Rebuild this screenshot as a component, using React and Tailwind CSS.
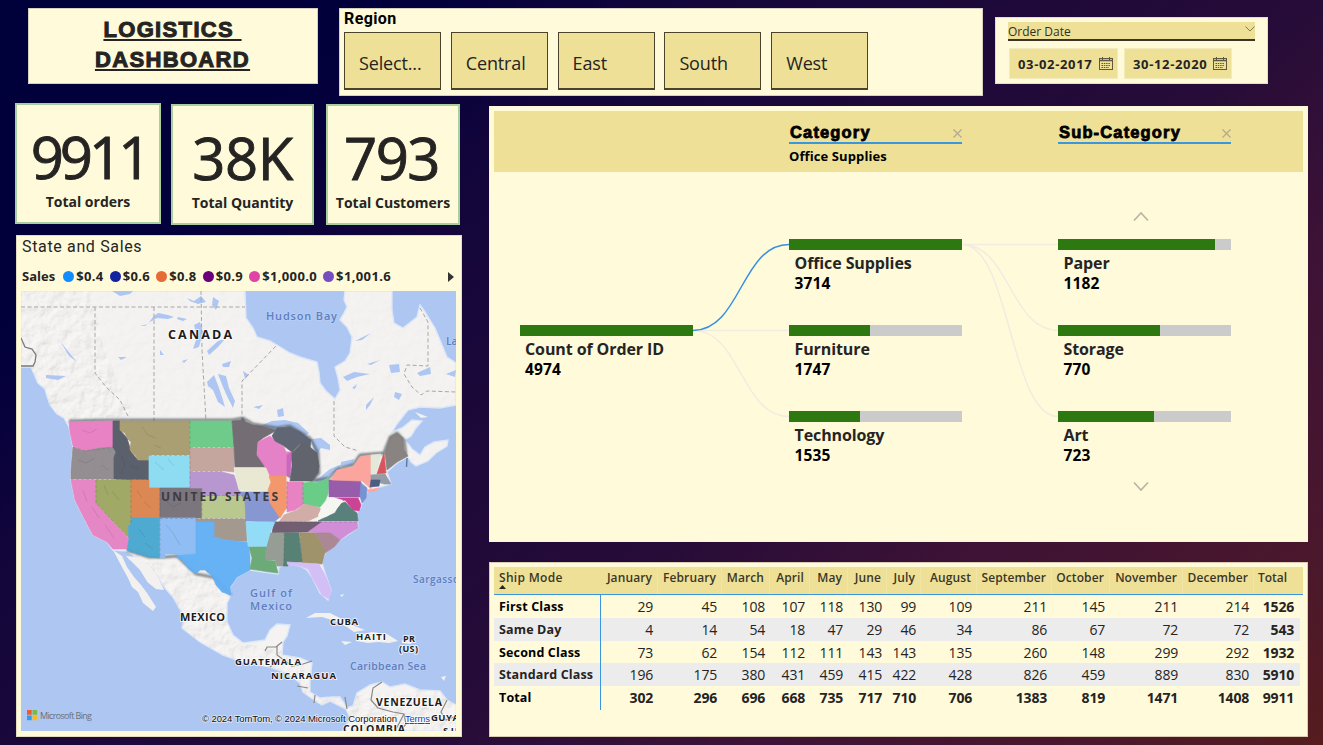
import React from "react";

const regions = ["Select...", "Central", "East", "South", "West"];

const legend = [
  ["$0.4", "bg-[#118dff]"],
  ["$0.6", "bg-[#12239e]"],
  ["$0.8", "bg-[#e66c37]"],
  ["$0.9", "bg-[#6b007b]"],
  ["$1,000.0", "bg-[#e044a7]"],
  ["$1,001.6", "bg-[#744ec2]"],
];

const months = [
  "January", "February", "March", "April", "May", "June", "July",
  "August", "September", "October", "November", "December",
];

const shipRows = [
  ["First Class", 29, 45, 108, 107, 118, 130, 99, 109, 211, 145, 211, 214, 1526],
  ["Same Day", 4, 14, 54, 18, 47, 29, 46, 34, 86, 67, 72, 72, 543],
  ["Second Class", 73, 62, 154, 112, 111, 143, 143, 135, 260, 148, 299, 292, 1932],
  ["Standard Class", 196, 175, 380, 431, 459, 415, 422, 428, 826, 459, 889, 830, 5910],
  ["Total", 302, 296, 696, 668, 735, 717, 710, 706, 1383, 819, 1471, 1408, 9911],
];

const states = [
  ["#e97fc4", "69,422 113,421 113,447 100,448 85,451 80,450 73,446 70,432"],
  ["#918a8e", "73,447 80,450 85,451 100,448 115,447 116,452 114,457 114,479 71,479 71,470"],
  ["#e584c4", "71,480 96,480 96,503 129,539 127,549 113,549 107,542 93,535 85,520 75,500"],
  ["#9fa763", "96,480 131,480 131,524 128,526 129,538 96,503"],
  ["#575c69", "113,421 120,421 120,430 127,438 130,448 131,452 138,460 149,459 149,480 114,479 114,457 116,452 113,447"],
  ["#a89c6f", "120,421 190,421 190,455 149,455 149,460 138,460 135,455 130,450 131,442 127,438 125,433 120,430"],
  ["#8adcf3", "149,456 190,456 190,488 149,488"],
  ["#dc8550", "131,480 149,480 149,488 160,488 160,518 131,518"],
  ["#78717a", "160,488 202,488 202,518 160,518"],
  ["#49a8d0", "131,518 160,518 160,558 149,557 127,550 129,539 128,526 131,524"],
  ["#8cbcf5", "160,518 196,518 196,554 165,554 165,558 160,558"],
  ["#6bca86", "190,421 232,421 234,447 190,447"],
  ["#c3a49c", "190,448 234,448 234,472 225,471 190,471"],
  ["#b795cf", "190,472 222,472 234,475 239,490 243,496 202,496 202,488 190,488"],
  ["#b8c78c", "202,496 243,496 246,502 246,518 202,518"],
  ["#a1978c", "196,519 246,519 247,541 235,541 225,540 214,537 214,522 196,522"],
  ["#62b0f5", "196,522 214,522 214,537 225,540 235,541 248,542 250,556 250,570 237,577 230,587 231,595 222,592 216,585 213,577 205,570 200,570 196,574 188,568 184,562 175,555 196,554"],
  ["#706a70", "232,421 241,420 243,418 246,422 253,425 262,426 268,428 277,430 263,438 258,442 257,453 262,459 266,467 235,467 234,447"],
  ["#e57fc6", "258,442 270,436 275,441 284,447 286,452 294,452 291,462 289,476 269,476 264,465 257,455"],
  ["#c765bc", "287,455 294,451 291,462 290,478 287,476"],
  ["#5c6270", "272,436 277,428 290,427 300,432 311,440 310,448 300,444 292,452 284,446 275,441"],
  ["#5d6068", "290,481 292,466 292,453 302,443 310,447 317,453 319,466 318,473 312,481"],
  ["#e9e8d2", "234,468 266,468 271,480 267,491 239,490"],
  ["#8395d0", "240,492 268,492 275,507 280,517 274,522 246,521 245,502"],
  ["#f29668", "269,476 286,476 287,507 280,518 270,503 268,490 271,482"],
  ["#e880c2", "287,482 303,482 303,505 295,510 287,512"],
  ["#65cc84", "303,483 311,482 317,483 329,478 328,494 325,501 320,507 310,506 303,504"],
  ["#d0aba5", "279,522 284,515 297,510 305,504 320,508 321,515 308,521"],
  ["#9559a8", "329,480 360,480 363,489 361,497 329,497"],
  ["#fda39d", "332,478 337,470 353,467 360,457 371,455 371,489 362,481 332,480"],
  ["#fda39d", "367,490 380,488 375,491 368,492"],
  ["#e3e8d8", "371,455 381,454 376,474 371,474"],
  ["#d9505a", "384,453 386,473 377,474"],
  ["#86807e", "385,453 390,437 397,433 403,438 404,450 408,456 397,462 387,470"],
  ["#909aa5", "371,475 385,474 391,484 384,484 371,480"],
  ["#46597e", "371,480 380,480 379,486 370,487"],
  ["#7590d0", "361,483 367,488 366,498 362,503 360,496"],
  ["#cb3e94", "335,498 358,498 361,505 359,511 353,510 345,500 336,502"],
  ["#567d78", "318,521 326,517 335,513 340,504 345,502 353,510 357,513 358,521"],
  ["#6e5a6e", "274,522 322,522 310,532 272,533"],
  ["#cf8bd6", "322,522 357,522 358,528 348,534 340,540 330,534 308,532"],
  ["#a98592", "315,533 330,533 340,540 334,547 325,553"],
  ["#9d9068", "300,533 315,533 325,552 322,564 302,563"],
  ["#527e72", "284,533 299,533 302,562 288,563 288,566 283,566"],
  ["#939b93", "270,533 284,533 283,566 277,566 275,560 265,560 266,547"],
  ["#8fdcf8", "246,522 275,522 270,533 266,547 248,546"],
  ["#69a877", "249,547 266,547 265,560 275,561 278,573 270,572 263,571 250,569 252,558"],
  ["#d3bdf7", "287,562 302,563 319,564 326,577 331,590 329,599 322,595 317,586 312,577 308,569 300,566 288,565"],
];

const mainland =
  "M21 291H245L246 318L253 328L257 337L270 341L277 345L290 353L300 357L317 362L319 372L320 383L326 391L335 399L340 390L338 378L335 367L345 361L350 353L352 337L347 327L340 320L344 313L347 307L344 300L345 291H392L392 310L394 323L403 328L417 317L420 305L425 312L430 320L435 328L440 340L447 357L456 363V405L440 408L420 407L408 410L397 424L392 432L402 428L412 420L422 421L416 428L411 436L405 440L412 449L420 455L425 447L434 442L448 440L447 446L436 453L428 461L416 466L411 462L408 457L397 463L387 472L391 484L380 487L367 492L362 503L361 507L357 513L358 528L340 540L325 553L322 563L325 573L331 590L328 600L320 593L312 577L307 570L300 566L287 564L279 567L278 574L263 572L250 570L237 577L230 587L231 595L227 603L227 622L233 635L243 643L265 640L270 630L277 624L290 625L287 636L283 642L282 655L300 658L312 663L310 680L310 692L320 698L332 697L340 697L347 708L353 706L357 693L370 685L382 682L390 687L405 684L420 690L440 691L447 700L456 705V731H343L350 718L346 709L340 706L330 701L322 705L317 702L303 692L300 683L287 673L270 667L243 662L223 655L200 642L182 628L184 619L182 613L173 597L165 588L158 577L150 566L137 558L127 551L113 550L107 542L93 535L85 520L75 500L71 480L71 470L73 447L69 427L64 418L57 414L50 405L47 396L45 389L38 383L34 374L31 367L21 367Z";

const lakes = [
  "M112 291L120 296L130 294L133 291Z",
  "M140 326L148 324L153 317L158 313L168 315L174 317L168 319L157 318L150 322L145 326Z",
  "M178 317L187 319L183 321L177 319Z",
  "M187 298L194 301L201 296L206 302L198 304L190 301Z",
  "M213 297L219 301L216 310L212 305Z",
  "M194 325L200 322L203 332L199 347L193 349L197 337Z",
  "M207 351L218 341L225 339L218 347L209 355Z",
  "M222 364L231 361L229 367L223 367Z",
  "M207 382L214 375L219 388L222 397L225 407L218 402L213 390L208 386Z",
  "M218 374L226 376L229 388L235 401L233 408L227 396L223 387Z",
  "M118 357L127 357L121 360Z",
  "M160 350L164 355L160 355Z",
  "M182 361L188 359L184 363Z",
  "M355 341L371 333L362 340Z",
  "M343 377L354 372L370 374L357 377L347 381Z",
  "M389 365L399 364L400 372L391 373Z",
  "M417 373L430 367L431 374L420 376Z",
  "M395 392L402 394L399 400L394 397Z",
  "M366 405L374 397L370 405L366 410Z",
  "M352 388L357 384L355 389Z",
  "M367 364L380 360L371 365Z",
  "M446 374L456 370L455 377Z",
  "M253 407L263 405L259 409Z",
  "M277 410L283 408L284 416L278 417Z",
  "M243 371L249 375L245 379Z",
  "M60 341L67 350L77 362L69 356Z",
  "M46 375L66 376L58 380L46 378Z",
  "M262 425L272 421L285 420L298 423L309 433L304 436L296 430L284 426L271 430Z",
  "M311 439L321 438L330 445L330 450L321 448L316 457Z",
  "M315 481L330 469L342 464L339 469L330 475L318 484Z",
  "M341 462L354 459L352 465L341 467Z",
];

const borders =
  "M21 307H245M95 307V373L106 387L120 400L129 418M154 307V421M201 291L202 350L206 421M242 421V381L277 345M334 401V436L345 447L359 451M420 308L428 322L428 366L407 365L404 374L412 387L421 395L427 391L456 392";

function MapLabel({ x, y, width, children, size = 10.5, weight = 700, fill = "#1c1c1c", halo = "#ffffff" }) {
  return (
    <text
      x={x}
      y={y}
      textLength={width}
      lengthAdjust="spacing"
      fontSize={size}
      fontWeight={weight}
      fill={fill}
      stroke={halo}
      strokeWidth="2"
      strokeOpacity="0.75"
      paintOrder="stroke"
      strokeLinejoin="round"
    >
      {children}
    </text>
  );
}

function SalesMap() {
  const sea = { fill: "#5f7fc0", halo: "#b9cff6", weight: 600 };
  return (
    <svg viewBox="21 291 435 440" className="block h-[440px] w-[435px]" fontFamily="'Open Sans', 'Noto Sans', sans-serif">
      <defs>
        <filter id="relief" x="0" y="0" width="100%" height="100%">
          <feTurbulence type="fractalNoise" baseFrequency="0.09" numOctaves="4" seed="8" result="n" />
          <feDiffuseLighting in="n" surfaceScale="2.2" lightingColor="#ffffff" result="l">
            <feDistantLight azimuth="225" elevation="58" />
          </feDiffuseLighting>
          <feComposite in="l" in2="SourceAlpha" operator="in" />
        </filter>
        <clipPath id="land"><path d={mainland} /></clipPath>
        <filter id="soft"><feGaussianBlur stdDeviation="0.8" /></filter>
      </defs>
      <rect x="21" y="291" width="435" height="440" fill="#adc6f2" />
      <path d={mainland} fill="#f4f3f1" stroke="#dbe6f8" strokeWidth="1.4" />
      <path d="M113 550L122 556L127 567L134 577L141 585L147 593L156 607L153 611L143 603L138 592L132 587L128 578L123 569Z" fill="#f2f1ef" />
      <path d="M126 556L135 566L147 582L156 589L164 590L158 577L148 563L137 557Z" fill="#f2f1ef" />
      <path d="M130 560L140 570L151 588L143 581L134 572Z" fill="#adc6f2" />
      <path d="M51 399L58 402L66 408L74 418L69 418L60 413L53 406Z" fill="#f2f1ef" />
      <path d="M306 618L315 613L330 613L342 619L352 625L365 630L354 632L347 627L335 621L322 617Z" fill="#f2f1ef" />
      <path d="M359 635L372 632L387 634L398 641L389 643L378 642L368 643L356 641Z" fill="#f2f1ef" />
      <path d="M341 641L352 642L345 645ZM402 640L412 641L411 644L402 643ZM415 412L428 417L421 418ZM340 595L344 594L342 597ZM441 677L446 676L444 681Z" fill="#f2f1ef" />
      <g clipPath="url(#land)">
        <g filter="url(#relief)" opacity="0.34">
          <path d="M21 291H92L103 345L120 385L140 421V560L210 565L232 600L230 640L300 655L315 700L456 685V731H343L300 700L180 640L110 545L60 420L21 367Z" fill="#fff" />
        </g>
        <g filter="url(#relief)" opacity="0.07">
          <rect x="90" y="291" width="366" height="180" fill="#fff" />
        </g>
      </g>
      <g fill="#adc6f2">{lakes.map((d) => <path key={d} d={d} />)}</g>
      <path d={borders} fill="none" stroke="#a9a7a4" strokeWidth="1" strokeDasharray="4 2.5" />
      <path d="M21 338L25 347L32 349L36 355L35 362L33 366L21 366" fill="none" stroke="#77797b" strokeWidth="1.3" />
      <g fill="none" stroke="#8b8984" strokeWidth="1.2">
        <path d="M265 651L267 647H277V655M282 642L276 647M277 655L284 660L292 666L303 664L312 661M270 667L276 662M297 686L308 688M315 695L314 703M345 697L347 709M382 682L373 688L371 700L378 708L393 712L404 714L406 724L400 731M447 700L441 712L446 720L456 716M404 714L395 731" />
      </g>
      <g stroke="#3f4850" strokeWidth="2.4" fill="none" opacity="0.75" filter="url(#soft)">
        <path d="M69 421L113 420H232L243 418L253 424L277 428L290 426L310 438L318 453L319 473L312 481L329 478L338 469L353 465L360 455L384 453L390 437L397 433L404 440L406 455M127 550L149 557L165 557L177 556L196 574L213 577L231 595" />
      </g>
      <g opacity="0.97" strokeWidth="0.7" strokeLinejoin="round">
        {states.map(([color, points], i) => (
          <polygon key={i} points={points} fill={color} stroke={color} />
        ))}
      </g>
      <path d="M318 515L322 507L328 501L330 497L336 498L343 500L340 505L334 512L326 517L319 518Z" fill="#f5f6f2" />
      <g fill="none" stroke="#555" strokeWidth="0.6" strokeDasharray="3 2" opacity="0.4">
        <path d="M73 447L85 451L115 447M71 479.500H149M190 421V488M190 447.500H234M190 471.500H222M202 495.500H243M160 518.500H246M131 480V524M160 488V558M202 488V518M149 455.500H190M96 480V503L128 537M274 522H357M287 481V511M303 482V504M284 533V566M300 533L302 563" />
      </g>
      <g fill="none" stroke="#2c3c46" strokeWidth="0.8" opacity="0.18">
        <path d="M82 430L90 433L97 429M78 460L86 463L95 458M102 465L108 470M121 455L125 464L121 474M130 465L138 469M142 427L148 435L156 438M154 445L161 448M155 462L164 470M168 459L174 466M104 485L108 495M112 491L119 500M137 490L142 498M144 502L151 508M166 501L173 507L181 503M166 525L173 533L180 545M139 529L145 537M145 543L153 549M83 490L87 502M92 507L99 518M105 525L114 538" />
      </g>
      <path d="M407 458L406.500 467" stroke="#5b7ba3" strokeWidth="1.4" />

      <MapLabel x={168} y={339} width={64} size={12.5}>CANADA</MapLabel>
      <MapLabel x={161} y={500.500} width={117} size={12} fill="#3d3b42" halo="transparent">UNITED STATES</MapLabel>
      <MapLabel x={180} y={621} width={45} size={11}>MEXICO</MapLabel>
      <MapLabel x={330} y={625} width={28} size={9.5}>CUBA</MapLabel>
      <MapLabel x={356} y={640} width={30} size={9.5}>HAITI</MapLabel>
      <MapLabel x={403} y={641.500} width={12} size={9}>PR</MapLabel>
      <MapLabel x={399} y={651.500} width={19} size={9}>(US)</MapLabel>
      <MapLabel x={235} y={664.500} width={66} size={9.5}>GUATEMALA</MapLabel>
      <MapLabel x={271} y={679} width={65} size={9.5}>NICARAGUA</MapLabel>
      <MapLabel x={376} y={706} width={66} size={10.5}>VENEZUELA</MapLabel>
      <MapLabel x={343} y={733} width={62} size={10.5}>COLOMBIA</MapLabel>
      <MapLabel x={431} y={720.500} width={28} size={9.5}>GUYA</MapLabel>
      <MapLabel x={443} y={734} width={15} size={9.5}>SU</MapLabel>
      <MapLabel x={266} y={319.500} width={71} size={11} {...sea}>Hudson Bay</MapLabel>
      <MapLabel x={446} y={344.500} width={12} size={11} {...sea}>La</MapLabel>
      <MapLabel x={250} y={597} width={42} size={11} {...sea}>Gulf of</MapLabel>
      <MapLabel x={250} y={609.500} width={42} size={11} {...sea}>Mexico</MapLabel>
      <MapLabel x={413} y={583} width={46} size={10} {...sea}>Sargasso</MapLabel>
      <MapLabel x={350} y={669.500} width={76} size={10.5} {...sea}>Caribbean Sea</MapLabel>

      <g>
        <rect x="27" y="710" width="4.700" height="4.700" fill="#f1582b" />
        <rect x="32.500" y="710" width="4.700" height="4.700" fill="#7eb842" />
        <rect x="27" y="715.500" width="4.700" height="4.700" fill="#2ba0e8" />
        <rect x="32.500" y="715.500" width="4.700" height="4.700" fill="#fab91c" />
        <text x="40" y="719" fontSize="9" textLength="52" fill="#6b7076">Microsoft Bing</text>
      </g>
      <g fontFamily="'Liberation Sans', Arial, sans-serif" fontSize="9.500" stroke="#fff" strokeOpacity="0.6" strokeWidth="1.5" paintOrder="stroke">
        <text x="202" y="722" textLength="195" fill="#111">© 2024 TomTom, © 2024 Microsoft Corporation</text>
        <text x="405" y="722" textLength="25" fill="#1d3fae" textDecoration="underline">Terms</text>
      </g>
    </svg>
  );
}

function CalendarIcon() {
  return (
    <svg viewBox="0 0 14 13" className="h-[13px] w-[14px]" fill="none" stroke="#5d5841">
      <rect x="0.500" y="1.500" width="13" height="11" />
      <path d="M0.500 3.500H13.500" strokeWidth="1.500" />
      <path d="M3.500 0V3M10.500 0V3" />
      <path d="M2.500 6.500H11.500M2.500 8.500H11.500M2.500 10.500H10" strokeDasharray="1.500 0.800" />
    </svg>
  );
}

function DateBox({ value, width }) {
  return (
    <div className={`flex h-[31px] items-center justify-between border border-[#f3ebbb] bg-[#eee097] pl-2 pr-1 ${width}`}>
      <span className="pt-[2px] text-[13px] font-bold tracking-[0.65px] text-[#252423]">{value}</span>
      <CalendarIcon />
    </div>
  );
}

function KpiCard({ value, label, className, valueClass }) {
  return (
    <div className={`flex flex-col items-center border-2 border-[#a9cf9f] bg-[#fffada] ${className}`}>
      <div className={`mt-[18px] h-[69px] whitespace-nowrap text-[58px] leading-[68px] text-[#252423] [-webkit-text-stroke:0.9px_#252423] ${valueClass}`}>{value}</div>
      <div className="whitespace-nowrap text-sm font-bold leading-[20px] text-[#252423]">{label}</div>
    </div>
  );
}

function TreeNode({ label, value, fill, className }) {
  return (
    <div className={`absolute w-[173px] ${className}`}>
      <div className="h-[11px] bg-[#cbcbcb]">
        <div className="h-full bg-[#2d7811]" style={{ width: fill }} />
      </div>
      <div className="pl-[5.500px] pt-[3px] text-[16px] font-bold leading-[20px] tracking-[-0.1px]">
        <div className="whitespace-nowrap text-[#252423]">{label}</div>
        <div className="tracking-[0.1px] text-[15.5px] text-black">{value}</div>
      </div>
    </div>
  );
}

function TreeHeader({ title, selection, className }) {
  return (
    <div className={`w-[173px] ${className}`}>
      <div className="flex h-[22px] items-center justify-between border-b-2 border-[#3a96dd]">
        <span className="pl-px font-['Liberation_Sans'] text-[16.5px] font-bold leading-[20px] tracking-[1.15px] text-black [-webkit-text-stroke:0.8px_#000]">{title}</span>
        <svg viewBox="0 0 9 9" className="mt-[2px] h-[9px] w-[9px]" stroke="#b3a98c" strokeWidth="1.2">
          <path d="M0.500 0.500L8.500 8.500M8.500 0.500L0.500 8.500" />
        </svg>
      </div>
      <div className="pt-[3px] text-[13px] font-bold leading-[18px] tracking-[0.1px] text-black">{selection}</div>
    </div>
  );
}

function DecompositionTree() {
  return (
    <section className="flex h-[436px] w-[819px] flex-col border border-[#fdf5dc] bg-[#fffada] px-1 pt-1">
      <header className="flex h-[61px] bg-[#eee097] pl-[295px] pt-[11px]">
        <TreeHeader title="Category" selection="Office Supplies" />
        <TreeHeader title="Sub-Category" selection="" className="ml-[96px]" />
      </header>
      <div className="relative flex-1">
        <svg viewBox="494 172 809 368" className="absolute left-0 top-0 h-[368px] w-[809px]" fill="none">
          <g stroke="#f2ece0" strokeWidth="1.5">
            <path d="M693 330.500H789M693 330.500C741 330.500 741 416.500 789 416.500" />
            <path d="M962 244.500H1058M962 244.500C1010 244.500 1010 330.500 1058 330.500M962 244.500C1010 244.500 1010 416.500 1058 416.500" />
          </g>
          <path d="M693 330.500C741 330.500 741 244.500 789 244.500" stroke="#3191e3" strokeWidth="1.5" />
          <path d="M1134 220.500L1141 213L1148 220.500M1134 482.500L1141 490L1148 482.500" stroke="#b9b3a4" strokeWidth="1.600" />
        </svg>
        <TreeNode className="left-[25.500px] top-[153px]" label="Count of Order ID" value="4974" fill="100%" />
        <TreeNode className="left-[295px] top-[67px]" label="Office Supplies" value="3714" fill="100%" />
        <TreeNode className="left-[295px] top-[153px]" label="Furniture" value="1747" fill="47%" />
        <TreeNode className="left-[295px] top-[239px]" label="Technology" value="1535" fill="41.3%" />
        <TreeNode className="left-[564px] top-[67px]" label="Paper" value="1182" fill="90.8%" />
        <TreeNode className="left-[564px] top-[153px]" label="Storage" value="770" fill="59.2%" />
        <TreeNode className="left-[564px] top-[239px]" label="Art" value="723" fill="55.5%" />
      </div>
    </section>
  );
}

const tableGrid = "grid grid-cols-[107px_57px_64px_48px_40px_38px_39px_34px_56px_75px_58px_73px_71px_46px]";

function ShipTable() {
  return (
    <section className="h-[175px] w-[819px] border border-[#d9ccb0] bg-[#fffada] px-1 pt-1">
      <div className={`${tableGrid} h-[28px] border-b border-[#3a96dd] bg-[#eee097] text-[12px] font-semibold leading-[21px] text-[#3a3729]`}>
        <div className="flex flex-col pl-[5px]">
          <span className="h-[18px] tracking-[0.3px]">Ship Mode</span>
          <svg viewBox="0 0 7 4" className="h-[4px] w-[7px]"><path d="M0 4L3.500 0L7 4Z" fill="#252423" /></svg>
        </div>
        {months.map((m) => (
          <div key={m} className="flex justify-end border-r border-[#f1e6a8] pr-[5px] tracking-[0.1px]">{m}</div>
        ))}
        <div className="pl-1">Total</div>
      </div>
      {shipRows.map((row, r) => (
        <div key={row[0]} className={`${tableGrid} mr-[3px] ${r % 2 ? "bg-[#ececec]" : ""} ${r === 2 || r === 4 ? "h-[22.600px]" : "h-[22.800px]"} items-stretch text-[14px] leading-[24px] tracking-[-0.2px] text-[#252423]`}>
          {row.map((cell, c) => (
            <div
              key={c}
              className={
                c === 0
                  ? `border-r border-[#3a96dd] pl-[5px] text-[12.5px] font-bold leading-[23px] tracking-[0.15px] ${r % 2 ? "text-[#252423]" : "text-black"}`
                  : `${c === 13 ? "pr-[6px]" : "pr-[5px]"} text-right ${r === 4 || c === 13 ? "font-bold" : ""}`
              }
            >
              {cell}
            </div>
          ))}
        </div>
      ))}
    </section>
  );
}

export default function App() {
  return (
    <main className="h-[745px] w-[1323px] overflow-hidden bg-[linear-gradient(140deg,#00003a_0%,#03003c_20%,#12053b_30%,#270c38_60%,#3d1236_73%,#4a172c_89%,#561c1e_100%)] font-['Open_Sans','Noto_Sans',sans-serif]">
      <div className="flex h-[103px] items-start pl-[28px] pt-2">
        <h1 className="flex h-[76px] w-[290px] flex-col items-center justify-center border border-[#d5cfc0] bg-[#fffada] pb-[2px] pr-[1px] font-['Liberation_Sans'] text-[22px] font-bold leading-[30px] tracking-[1.35px] text-[#252423] underline decoration-2 underline-offset-[2px] [-webkit-text-stroke:1px_#252423] [text-decoration-skip-ink:none]">
          <span className="whitespace-pre">LOGISTICS </span>
          <span>DASHBOARD</span>
        </h1>
        <section className="ml-[21px] h-[88px] w-[644px] border border-[#d5cfc0] bg-[#fffada] pl-1">
          <h2 className="h-[23px] font-['Roboto'] text-[16px] font-bold leading-[20px] tracking-[0.4px] text-black">Region</h2>
          <div className="flex gap-[9.800px]">
            {regions.map((r) => (
              <button key={r} className="flex h-[58px] w-[97px] items-center border border-b-2 border-[#4b432a] bg-[#eee097] pl-[14px] pt-[5px] text-left text-[18px] tracking-[-0.15px] text-[#252423]">
                {r}
              </button>
            ))}
          </div>
        </section>
        <section className="ml-3 mt-[9px] h-[67px] w-[273px] border border-[#e5dcd0] bg-[#fffada] pl-3 pt-1">
          <div className="flex h-[19px] w-[247px] items-center justify-between border-b-2 border-[#3a3526] bg-[#eee097]">
            <span className="pt-[2px] text-[12px] text-[#333022]">Order Date</span>
            <svg viewBox="0 0 10 6" className="mb-1 h-[6px] w-[10px]" fill="none" stroke="#807850"><path d="M0.500 0.500L5 5L9.500 0.500" /></svg>
          </div>
          <div className="mt-[7px] flex gap-[6px] pl-px">
            <DateBox value="03-02-2017" width="w-[109px]" />
            <DateBox value="30-12-2020" width="w-[108px]" />
          </div>
        </section>
      </div>

      <div className="flex pl-[15px]">
        <div className="w-[474px]">
          <div className="flex h-[132px] items-start">
            <KpiCard value="9911" label="Total orders" className="h-[121px] w-[146px]" valueClass="tracking-[-4px] pl-[2px]" />
            <KpiCard value="38K" label="Total Quantity" className="ml-[10px] mt-px h-[121px] w-[143px]" valueClass="tracking-[-0.500px]" />
            <KpiCard value="793" label="Total Customers" className="ml-3 mt-px h-[121px] w-[134px]" valueClass="tracking-[-1.500px] pr-[3px]" />
          </div>
          <section className="ml-px h-[502px] w-[446px] border border-[#e5dcc0] bg-[#fffada] px-1">
            <h2 className="h-[26px] pl-px font-['Roboto'] text-[16px] leading-[22px] tracking-[0.65px] text-[#252423]">State and Sales</h2>
            <div className="flex h-[29px] items-center pl-px text-[13px] font-bold text-[#252423]">
              <span className="mr-2">Sales</span>
              {legend.map(([label, color]) => (
                <span key={label} className="mr-[6px] flex items-center gap-[2px] tracking-[0.37px]">
                  <i className={`h-[11px] w-[11px] rounded-full ${color}`} />
                  {label}
                </span>
              ))}
              <svg viewBox="0 0 6 10" className="ml-auto mr-[3px] h-[10px] w-[6px]"><path d="M0 0L6 5L0 10Z" fill="#333" /></svg>
            </div>
            <SalesMap />
          </section>
        </div>
        <div className="flex flex-col gap-[20px] pt-[3px]">
          <DecompositionTree />
          <ShipTable />
        </div>
      </div>
    </main>
  );
}
